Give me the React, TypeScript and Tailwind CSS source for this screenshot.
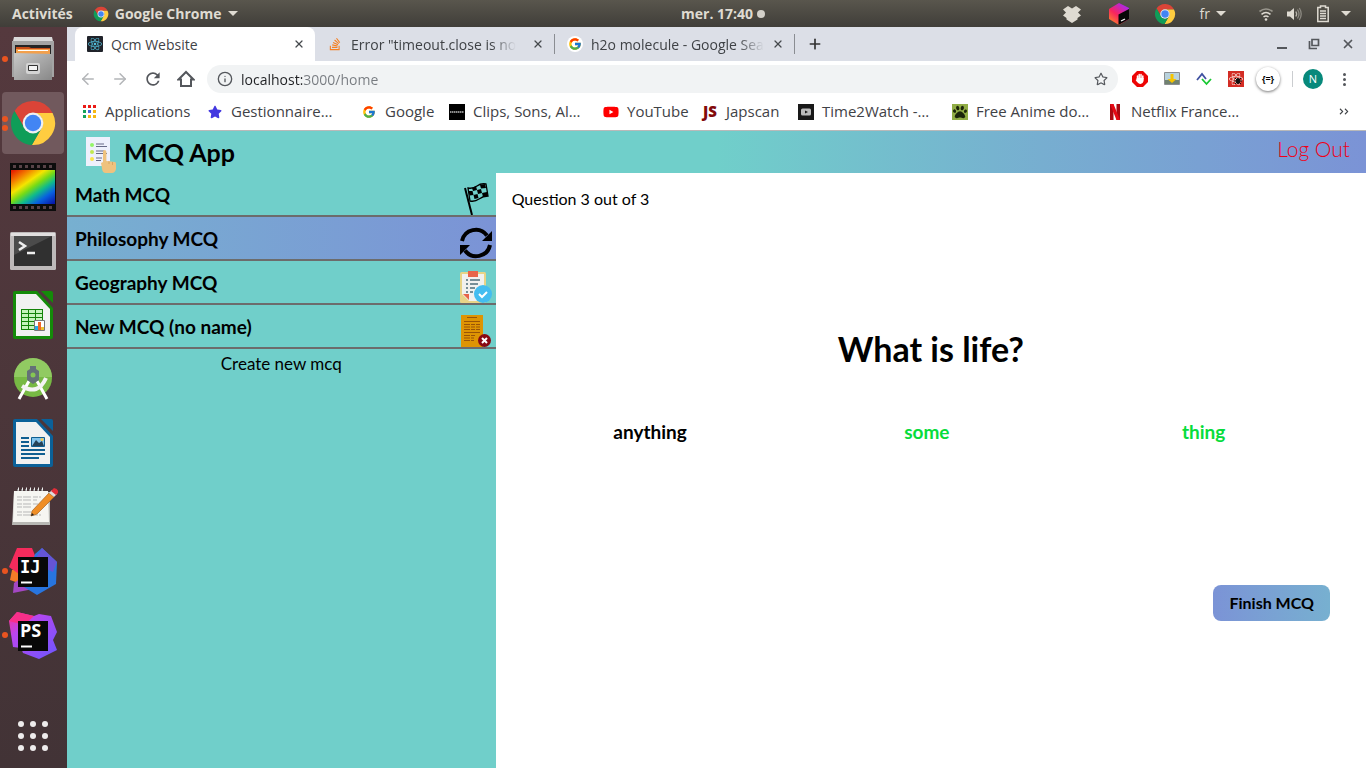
import type { ReactNode } from "react";
import {
  FaChevronRight,
  FaPaw,
  FaReact,
  FaRegStar,
  FaStackOverflow,
  FaStar,
  FaYoutube,
} from "react-icons/fa";
import { FcGoogle } from "react-icons/fc";
import { MdRefresh } from "react-icons/md";
import { ArrowLeft, ArrowRight, Info, Plus, X } from "lucide-react";

const UI = "font-['Open_Sans','Noto_Sans',sans-serif]";

function ChromeLogo({ className }: { className: string }) {
  return (
    <svg viewBox="0 0 48 48" className={className} aria-hidden="true">
      <path fill="#db4437" d="M24 14H43.6A22 22 0 0 0 5.54 12.03L15.34 29A10 10 0 0 1 24 14Z" />
      <path fill="#ffcd40" d="M43.6 14H24A10 10 0 0 1 32.66 29L22.86 45.97A22 22 0 0 0 43.6 14Z" />
      <path fill="#0f9d58" d="M5.54 12.03L15.34 29A10 10 0 0 0 32.66 29L22.86 45.97A22 22 0 0 1 5.54 12.03Z" />
      <circle cx="24" cy="24" r="10.4" fill="#f1f1f1" />
      <circle cx="24" cy="24" r="8.2" fill="#4285f4" />
    </svg>
  );
}

function Caret() {
  return (
    <svg viewBox="0 0 10 5" className="h-[5px] w-[10px] fill-[#dfdbd2]" aria-hidden="true">
      <path d="M0 0h10L5 5z" />
    </svg>
  );
}

function TopBar() {
  return (
    <header className={`${UI} flex h-[27px] shrink-0 items-center bg-linear-to-b from-[#59564d] to-[#403e39] text-[14px] font-bold text-[#dfdbd2]`}>
      <div className="flex w-1/2 items-center pl-3">
        <button type="button">Activités</button>
        <button type="button" className="ml-5 flex items-center gap-1.5">
          <ChromeLogo className="size-4" />
          Google Chrome
          <Caret />
        </button>
      </div>
      <button type="button" className="-ml-0.5 flex items-center gap-1">
        mer. 17:40
        <span className="size-2 rounded-full bg-[#d3d0c9]" />
      </button>
      <div className="ml-auto flex items-center pr-[15px]">
        <svg viewBox="0 0 20 20" className="size-5" fill="#dfdbd2" aria-hidden="true">
          <path d="M6 2l4 2.500L14 2l5 3.500-3 3 3 3-3.500 2.500v1.500L10 19l-5.500-3.500V14L1 11.500l3-3-3-3z" />
        </svg>
        <svg viewBox="0 0 22 22" className="ml-[26px] size-[22px]" aria-hidden="true">
          <defs>
            <linearGradient id="toolbox" x1="0" x2="0.7" y1="1" y2="0">
              <stop offset="0" stopColor="#ff9a1f" />
              <stop offset="0.5" stopColor="#f8255e" />
              <stop offset="1" stopColor="#a928f0" />
            </linearGradient>
          </defs>
          <path fill="url(#toolbox)" d="M11 0l10 5v11l-10 6L1 16V6z" />
          <path fill="#080808" d="M10.500 11.500L21 6v10l-10.500 6z" />
          <path stroke="#fff" strokeWidth="1.300" d="M13 18l4-2" />
        </svg>
        <ChromeLogo className="ml-[24px] size-[22px]" />
        <button type="button" className="ml-6 flex items-center gap-1.5 text-[14px] font-normal">
          fr
          <Caret />
        </button>
        <svg viewBox="0 0 16 16" className="ml-8 size-4" fill="none" stroke="#dfdbd2" strokeWidth="1.600" aria-hidden="true">
          <path stroke="#99968d" d="M1.500 5.500q6.500-5 13 0" />
          <path d="M3.500 8.300q4.500-3.500 9 0M5.500 11q2.500-2 5 0" />
          <circle cx="8" cy="13.500" r="1.300" fill="#dfdbd2" stroke="none" />
        </svg>
        <svg viewBox="0 0 16 16" className="ml-3 size-4" fill="none" aria-hidden="true">
          <path fill="#dfdbd2" d="M1 5.500h3L8 2v12L4 10.500H1z" />
          <path stroke="#bab7ae" strokeWidth="1.300" d="M9.800 5.500q1.700 2.500 0 5" />
          <path stroke="#8d8a82" strokeWidth="1.300" d="M11.500 3.500q3 4.500 0 9M13.300 2q3.800 6 0 12" />
        </svg>
        <svg viewBox="0 0 14 18" className="ml-3.5 h-[18px] w-[14px]" fill="none" stroke="#dfdbd2" strokeWidth="1.500" aria-hidden="true">
          <path d="M4.500 2.500v-1.500h5v1.500h2.700v14H1.800v-14zM4 6h6M4 8.500h6M4 11h6M4 13.500h6" />
        </svg>
        <span className="ml-[11px]">
          <Caret />
        </span>
      </div>
    </header>
  );
}

function FilesIcon() {
  return (
    <svg viewBox="0 0 42 46" className="h-[46px] w-[42px]" aria-hidden="true">
      <defs>
        <linearGradient id="cabinet" x1="0" x2="1" y1="0" y2="1">
          <stop offset="0" stopColor="#c9c9c9" />
          <stop offset="1" stopColor="#888" />
        </linearGradient>
      </defs>
      <path fill="#dadada" d="M2 1h38l1 4H1z" />
      <path fill="#a4a4a4" d="M0 5h42v36H0z" />
      <path fill="#242424" d="M3 9h36v11H3z" />
      <path fill="#c64d18" d="M4 11h13l2 1h19v7H4z" />
      <path fill="#f3a04c" d="M4 13h34v6H4z" />
      <path fill="#fff" d="M6 14h30v1H6z" />
      <path fill="url(#cabinet)" d="M2 17l38 1v26H2z" />
      <rect x="14" y="27" width="14" height="11" rx="2" fill="#d4d4d4" />
      <path fill="#f4f4f4" stroke="#333" d="M16.500 29.500h9v5h-9z" />
    </svg>
  );
}

function FilmIcon() {
  return (
    <svg viewBox="0 0 46 48" className="h-12 w-[46px]" aria-hidden="true">
      <defs>
        <linearGradient id="rainbow" x1="0.05" y1="0" x2="0.95" y2="1">
          <stop offset="0" stopColor="#e51b00" />
          <stop offset="0.18" stopColor="#f27a00" />
          <stop offset="0.36" stopColor="#f5e500" />
          <stop offset="0.5" stopColor="#76db16" />
          <stop offset="0.64" stopColor="#10bb8a" />
          <stop offset="0.8" stopColor="#0861df" />
          <stop offset="1" stopColor="#0818a9" />
        </linearGradient>
      </defs>
      <path fill="#0c0c0c" d="M0 0h46v48H0z" />
      <path stroke="#584348" strokeWidth="3" strokeDasharray="3 3" d="M3 3.500h42M3 44.500h42" />
      <path fill="url(#rainbow)" d="M1 7h44v34H1z" />
    </svg>
  );
}

function TerminalIcon() {
  return (
    <svg viewBox="0 0 46 38" className="h-[38px] w-[46px]" aria-hidden="true">
      <rect width="46" height="38" rx="1.500" fill="#bdb9b9" />
      <path fill="#e1dfdf" d="M1 1h44v3H1z" />
      <path fill="#303030" d="M4 4h38v30H4z" />
      <path fill="#4b4b4b" d="M4 4h38L4 23z" />
      <path fill="none" stroke="#eee" strokeWidth="2.500" d="M9 10l6 4-6 4M17 21h8" />
    </svg>
  );
}

function OfficeIcon({ color, children }: { color: string; children: ReactNode }) {
  return (
    <svg viewBox="0 0 40 48" className="h-12 w-10" aria-hidden="true">
      <path fill={color} d="M2 0h22l16 17v29q0 2-2 2H2q-2 0-2-2V2q0-2 2-2zM28 0h10q2 0 2 2v10z" />
      <path fill="#f1f1f1" d="M3 3h20l14 15v27H3z" />
      {children}
    </svg>
  );
}

function CalcIcon() {
  return (
    <OfficeIcon color="#148b09">
      <path fill="#138208" d="M8 18h22v21H8z" />
      <path fill="#c5f3bc" d="M9 19h6v3H9zM16 19h6v3h-6zM23 19h6v3h-6zM9 23h6v3H9zM16 23h6v3h-6zM23 23h6v3h-6zM9 27h6v3H9zM16 27h6v3h-6zM23 27h6v3h-6zM9 31h6v3H9zM16 31h6v3h-6zM9 35h6v3H9zM16 35h6v3h-6z" />
      <path fill="#fff" stroke="#777" d="M21.500 29.500h10v10h-10z" />
      <path fill="#28a9e6" d="M22 35h3v4h-3z" />
      <path fill="#ef6728" d="M25 31h3v8h-3z" />
      <path fill="#edc133" d="M28 36h3v3h-3z" />
    </OfficeIcon>
  );
}

function WriterIcon() {
  return (
    <OfficeIcon color="#0b6199">
      <path stroke="#0f5e91" strokeWidth="2" d="M8 19h8M8 23h8M8 27h8M8 31h24M8 35h24M8 39h18" />
      <path fill="#83c3ec" stroke="#0f5e91" d="M18.500 18.500h13v9h-13z" />
      <path fill="#254157" d="M19 27l4-6 3 3 3-2 2 5z" />
      <circle cx="29" cy="20.500" r="1.500" fill="#f3c953" />
    </OfficeIcon>
  );
}

function AndroidStudioIcon() {
  return (
    <svg viewBox="0 0 40 42" className="h-[42px] w-10" aria-hidden="true">
      <circle cx="20" cy="20" r="19" fill="#77b944" />
      <path fill="#91ca62" d="M1 19a19 19 0 0 1 38 0z" />
      <path stroke="#fff" strokeWidth="3" d="M16 23L6 41M24 23l10 18" />
      <path fill="none" stroke="#f3f3f3" strokeWidth="4" d="M9 28q16 10 24-8" />
      <path fill="#647177" d="M17 8h6v3l3 2v9l-6 4-6-4v-9l3-2z" />
      <circle cx="20" cy="17" r="2.500" fill="#86c653" />
    </svg>
  );
}

function NotesIcon() {
  return (
    <svg viewBox="0 0 46 40" className="ml-1 h-10 w-[46px]" aria-hidden="true">
      <path fill="#b8b8b4" d="M2 5h36v33H0z" />
      <path fill="#f6f6f2" d="M2 4h34l1 31H1z" />
      <path stroke="#858585" strokeWidth="2" strokeDasharray="2 2" d="M5 3h28" />
      <path stroke="#eee" strokeWidth="3" strokeDasharray="1 3" d="M6 2h27" />
      <path stroke="#b7b7b7" strokeDasharray="5 1 8 2" d="M5 10h24M5 13h20M5 17h22M5 20h15M5 25h14M5 28h24" />
      <path fill="#ef8e25" stroke="#a86321" strokeWidth="0.700" d="M20 24L37 6l5 4-17 17-6 2z" />
      <path fill="#ddd" d="M37 6l3-3 5 4-3 3z" />
      <path fill="#e22d38" d="M39 4l3-3q5 1 4 5l-2 2z" />
      <path fill="#222" d="M19 29l1-3 2 2z" />
    </svg>
  );
}

function IdeaIcon({ label }: { label: string }) {
  const isIdea = label === "IJ";
  return (
    <svg viewBox="0 0 48 48" className="size-12" aria-hidden="true">
      <defs>
        <linearGradient id="violet" x1="0" x2="1" y1="0" y2="1">
          <stop offset="0" stopColor="#ff318c" />
          <stop offset="0.3" stopColor="#b946f0" />
          <stop offset="1" stopColor="#6b57ff" />
        </linearGradient>
      </defs>
      {isIdea ? (
        <>
          <path fill="#f47b27" d="M3 23l12-3 6 20-20-7z" />
          <path fill="#f62b5c" d="M8 1h15l6 15-12 16L0 20z" />
          <path fill="#a347c3" d="M5 36l17-12 7 17-25 5z" />
          <path fill="#2875df" d="M33 1l15 14-1 22-19 11-13-8L26 7z" />
          <path fill="#6554d6" d="M33 1l15 14-4 10-20-9z" />
        </>
      ) : (
        <>
          <path fill="url(#violet)" d="M8 1l17 4 5-2 12 2 6 16-4 8 4 10-18 9-16-6-2-5-8-1L0 10z" />
          <path fill="#f72f89" d="M8 1l17 4-10 9L0 10z" />
        </>
      )}
      <path fill="#080808" d="M9 10h30v30H9z" />
      <text x="11" y="26" fill="#fff" fontSize={isIdea ? 17 : 18} fontWeight="700" className={isIdea ? "font-['DejaVu_Sans_Mono',monospace]" : "font-['Open_Sans',sans-serif]"}>{label}</text>
      <path stroke="#fff" strokeWidth="2" d="M12 35.500h11" />
    </svg>
  );
}

const dockItems = [
  { name: "Files", icon: <FilesIcon />, dots: 1 },
  { name: "Chrome", icon: <ChromeLogo className="size-12" />, dots: 2, active: true },
  { name: "Video", icon: <FilmIcon />, dots: 0 },
  { name: "Terminal", icon: <TerminalIcon />, dots: 0 },
  { name: "Calc", icon: <CalcIcon />, dots: 0 },
  { name: "Android Studio", icon: <AndroidStudioIcon />, dots: 0 },
  { name: "Writer", icon: <WriterIcon />, dots: 0 },
  { name: "Notes", icon: <NotesIcon />, dots: 0 },
  { name: "IntelliJ", icon: <IdeaIcon label="IJ" />, dots: 1 },
  { name: "PhpStorm", icon: <IdeaIcon label="PS" />, dots: 1 },
];

function Dock() {
  return (
    <nav aria-label="Dock" className="flex w-[67px] shrink-0 flex-col bg-linear-to-b from-[#55393e] to-[#423336]">
      {dockItems.map((item) => (
        <button
          key={item.name}
          type="button"
          aria-label={item.name}
          className={`relative mx-0.5 my-px flex h-[62px] w-[62px] items-center justify-center rounded-[4px] ${item.active ? "bg-[#71595d]" : ""}`}
        >
          {item.icon}
          <span className="absolute inset-y-0 left-0 flex flex-col justify-center gap-[3px]">
            {Array.from({ length: item.dots }, (_, i) => (
              <span key={i} className="size-[6px] rounded-full bg-[#e95420]" />
            ))}
          </span>
        </button>
      ))}
      <button type="button" aria-label="Applications" className="mt-auto flex h-16 w-[66px] items-center justify-center">
        <span className="grid grid-cols-3 gap-[6px]">
          {Array.from({ length: 9 }, (_, i) => (
            <span key={i} className="size-[6px] rounded-full bg-[#eeecec]" />
          ))}
        </span>
      </button>
    </nav>
  );
}

function Tab({ title, icon, active = false }: { title: string; icon: ReactNode; active?: boolean }) {
  return (
    <div className={`flex w-[240px] items-center ${active ? "rounded-t-lg bg-white" : ""}`}>
      <button type="button" role="tab" aria-selected={active} className="flex min-w-0 flex-1 items-center gap-2 pl-3">
        <span className="flex size-4 shrink-0 items-center justify-center">{icon}</span>
        <span className={`whitespace-nowrap ${active ? "" : "mask-r-from-85%"}`}>{title}</span>
      </button>
      <button type="button" aria-label={`Close ${title}`} className="mr-2 ml-1 flex size-4 items-center justify-center">
        <X className="size-3 text-[#45494d]" strokeWidth={2.500} />
      </button>
      {!active && <span className="h-5 w-px bg-[#8a8d92]" />}
    </div>
  );
}

function TabStrip() {
  return (
    <div className="flex h-[34px] bg-[#dcdfe7] pl-2 text-[14px] text-[#3f4246]">
      <div role="tablist" className="flex">
        <Tab
          active
          title="Qcm Website"
          icon={
            <span className="flex size-4 items-center justify-center rounded-[1px] bg-[#20232a]">
              <FaReact className="size-3.5 text-[#53bfdc]" />
            </span>
          }
        />
        <Tab title={'Error "timeout.close is no'} icon={<FaStackOverflow className="size-3.5 text-[#f48024]" />} />
        <Tab
          title="h2o molecule - Google Sea"
          icon={
            <span className="flex size-4 items-center justify-center rounded-full bg-white">
              <FcGoogle className="size-3.5" />
            </span>
          }
        />
      </div>
      <button type="button" aria-label="New tab" className="ml-3">
        <Plus className="size-4 text-[#333]" strokeWidth={2.500} />
      </button>
      <div className="ml-auto flex items-center gap-[21px] pr-[11px] text-[#54575c]">
        <button type="button" aria-label="Minimize" className="mt-2 h-0.5 w-[10px] bg-[#54575c]" />
        <button type="button" aria-label="Restore">
          <svg viewBox="0 0 12 12" className="size-3" fill="none" stroke="currentColor" strokeWidth="1.700">
            <path d="M4 1.500h6.500v6H4zM1.500 3v7.500H9" />
          </svg>
        </button>
        <button type="button" aria-label="Close window">
          <X className="size-3.5" strokeWidth={3} />
        </button>
      </div>
    </div>
  );
}

function Toolbar() {
  return (
    <div className="flex h-9 items-center bg-white pr-5 pl-3 text-[#54575c]">
      <div className="flex items-center gap-3.5">
        <button type="button" aria-label="Back"><ArrowLeft className="size-[18px] text-[#b3b5b8]" /></button>
        <button type="button" aria-label="Forward"><ArrowRight className="size-[18px] text-[#b3b5b8]" /></button>
        <button type="button" aria-label="Reload"><MdRefresh className="size-5" /></button>
        <button type="button" aria-label="Home">
          <svg viewBox="0 0 18 18" className="size-[18px]" fill="none" stroke="currentColor" strokeWidth="2">
            <path d="M1.500 9.500L9 2l7.500 7.500H14V16H4V9.500z" />
          </svg>
        </button>
      </div>
      <label className="ml-3 flex h-7 flex-1 items-center rounded-full bg-[#f1f3f4] pr-2.5 pl-2.5">
        <Info className="mr-2 size-4 shrink-0" aria-label="Address" />
        <input
          type="text"
          defaultValue="localhost:3000/home"
          className="min-w-0 flex-1 bg-[linear-gradient(to_right,#202124_61px,#777b80_61px)] bg-clip-text text-[14px] text-transparent outline-none"
        />
        <FaRegStar className="size-3.5" aria-hidden="true" />
      </label>
      <div className="ml-3.5 flex items-center gap-4">
        <svg viewBox="0 0 16 16" className="size-4" aria-hidden="true">
          <path fill="#ed0505" d="M5 0h6l5 5v6l-5 5H5l-5-5V5z" />
          <path fill="none" stroke="#fff" strokeLinecap="round" strokeWidth="1.500" d="M5.500 8V5M7.200 7V3.500M9 7V3.500M10.800 8V5" />
          <path fill="#fff" d="M4.700 7h6.900v3q-.8 3-3 3-2.500 0-5-4l1-.7z" />
        </svg>
        <svg viewBox="0 0 16 14" className="h-3.5 w-4" aria-hidden="true">
          <path fill="#b9d3dd" stroke="#8c8f91" d="M.5.5h15v12H.5z" />
          <path fill="#708270" d="M1 8h14v4H1z" />
          <path fill="#f6c400" d="M6.500 2h3v5h3L8 11 3.500 7h3z" />
        </svg>
        <svg viewBox="0 0 16 14" className="h-3.5 w-4" fill="none" strokeWidth="1.800" aria-hidden="true">
          <path stroke="#3f51a1" d="M1 8l5-6 4 5" />
          <path stroke="#18c832" d="M6 7l4.500 5L15 7" />
        </svg>
        <span className="relative flex size-4 items-center justify-center bg-[#d32c24]">
          <FaReact className="size-3.5 text-[#fbe6e1]" />
          <svg viewBox="0 0 8 8" className="absolute right-0.5 bottom-0.5 size-2" aria-hidden="true">
            <ellipse cx="4" cy="4" rx="2" ry="3" fill="#111" />
            <path stroke="#111" d="M1 1l6 6M7 1L1 7M0 4h8" />
          </svg>
        </span>
        <span className="-mx-1 flex size-6 items-center justify-center rounded-full bg-white text-[9px] font-bold text-black shadow-[0_1px_3px_#0008]">{"{=}"}</span>
      </div>
      <span className="ml-4 h-4 w-px bg-[#cbcdd0]" />
      <button type="button" className="ml-2.5 size-5 rounded-full bg-[#07897b] text-[11px] text-white">N</button>
      <button type="button" aria-label="Menu" className="ml-5 flex flex-col gap-0.5">
        <span className="size-[3px] rounded-full bg-[#54575c]" />
        <span className="size-[3px] rounded-full bg-[#54575c]" />
        <span className="size-[3px] rounded-full bg-[#54575c]" />
      </button>
    </div>
  );
}

const appsColors = ["#ea1b16", "#ea1b16", "#ea1b16", "#15a35b", "#4967dc", "#f6b814", "#15a35b", "#f6b814", "#f6b814"];

const bookmarks = [
  {
    label: "Applications",
    width: "w-[126px]",
    icon: (
      <span className="grid grid-cols-3 gap-[2px]">
        {appsColors.map((color, i) => (
          <span key={i} className="size-[3px]" style={{ backgroundColor: color }} />
        ))}
      </span>
    ),
  },
  { label: "Gestionnaire…", width: "w-[154px]", icon: <FaStar className="size-3.5 text-[#4338e0]" /> },
  { label: "Google", width: "w-[88px]", icon: <FcGoogle className="size-3.5" /> },
  {
    label: "Clips, Sons, Al…",
    width: "w-[154px]",
    icon: (
      <svg viewBox="0 0 16 16" className="size-4">
        <path d="M0 0h16v16H0z" />
        <path stroke="#bbb" strokeWidth="1.500" strokeDasharray="1.500 .5" d="M1 8h14" />
      </svg>
    ),
  },
  { label: "YouTube", width: "w-[99px]", icon: <FaYoutube className="size-4 text-[#f00]" /> },
  { label: "Japscan", width: "w-[96px]", icon: <span className="text-[15px] font-extrabold text-[#820a0a]">JS</span> },
  {
    label: "Time2Watch -…",
    width: "w-[154px]",
    icon: (
      <svg viewBox="0 0 16 16" className="size-4">
        <path fill="#191919" d="M0 0h16v16H0z" />
        <rect x="3" y="4.500" width="10" height="7" rx="1.500" fill="#bbb" />
        <path fill="#191919" d="M7 6.500l3 1.500-3 1.500z" />
      </svg>
    ),
  },
  {
    label: "Free Anime do…",
    width: "w-[155px]",
    icon: (
      <span className="flex size-4 items-center justify-center bg-[#91ad45]">
        <FaPaw className="size-3.5 text-[#1c250a]" />
      </span>
    ),
  },
  {
    label: "Netflix France…",
    width: "w-[150px]",
    icon: (
      <svg viewBox="0 0 16 16" className="size-4">
        <path fill="#a90810" d="M3 0h3.500v16H3zM9.500 0H13v16H9.500z" />
        <path fill="#e50914" d="M3 0h3.500L13 16H9.500z" />
      </svg>
    ),
  },
];

function BookmarksBar() {
  return (
    <nav aria-label="Bookmarks" className="flex h-[34px] items-center border-b border-[#b9b9b9] bg-white pr-4 pb-1 pl-3.5 text-[15px] text-[#3f4246]">
      {bookmarks.map((bookmark) => (
        <a key={bookmark.label} href="#" className={`${bookmark.width} flex items-center gap-2 whitespace-nowrap`}>
          <span className="flex size-4 shrink-0 items-center justify-center">{bookmark.icon}</span>
          {bookmark.label}
        </a>
      ))}
      <button type="button" aria-label="More bookmarks" className="ml-auto flex">
        <FaChevronRight className="-mr-0.5 size-[7px]" />
        <FaChevronRight className="size-[7px]" />
      </button>
    </nav>
  );
}

function AppLogo() {
  return (
    <svg viewBox="0 0 32 38" className="h-[38px] w-8" aria-hidden="true">
      <path fill="#eef0fc" d="M1 1h24v29H1z" />
      <circle cx="7" cy="9" r="2" fill="#94f56a" />
      <circle cx="7" cy="16" r="2" fill="#c1e951" />
      <circle cx="7" cy="23" r="2" fill="#fae54b" />
      <path stroke="#686b88" strokeWidth="1.200" d="M11 8h8M11 10.500h11M11 15h8M11 17.500h11M11 22h6M11 24.500h5" />
      <path fill="#efc27e" d="M18 16q0-2 1.600-2t1.800 2v9l8.600 1q1 0 1 2v5q-1 4-4 4h-6q-4 0-4-5l-1-5 2-1z" />
      <path stroke="#d8a662" d="M24 25v3M27.500 26v3" />
    </svg>
  );
}

function FlagIcon() {
  return (
    <svg viewBox="0 0 32 32" className="size-8" aria-hidden="true">
      <path stroke="#000" strokeWidth="2" d="M5 5l7 27" />
      <path fill="none" stroke="#000" strokeWidth="1.300" d="M8 5q5 1 9-2t9-2l2 12q-5 0-9 3t-9 2z" />
      <path d="M12 5l4-2 1 4-4 1zM20 2l5-1 1 4-5 .5zM8.500 8l4 0 1 4-4 .5zM17 7l4-1 1 4-4 1zM13.500 12l4-1 1 4-4 1zM22 10l5-1 1 4-5 1z" />
    </svg>
  );
}

function RefreshIcon() {
  return (
    <svg viewBox="0 0 32 32" className="size-8" aria-hidden="true">
      <path fill="none" stroke="#000" strokeWidth="4" d="M2 14A14 14 0 0 1 27 8.500M30 18A14 14 0 0 1 5 23.500" />
      <path d="M32 4v10H22zM0 28V18h10z" />
    </svg>
  );
}

function ClipboardIcon() {
  return (
    <svg viewBox="0 0 32 32" className="size-8" aria-hidden="true">
      <rect y="1" width="26" height="31" rx="1.500" fill="#e8d487" />
      <path fill="#f1f1ef" d="M2 3h22v27H9l-7-7z" />
      <path fill="#e86449" d="M8 0h10v6H8zM3 23h6v6z" />
      <path stroke="#768e97" strokeWidth="2" d="M6 9h2M10 9h10M6 13h2M10 13h8M6 17h2M10 17h5M6 21h2M10 21h3" />
      <circle cx="23" cy="23" r="9" fill="#43bdf0" />
      <path fill="none" stroke="#fff" strokeWidth="2" d="M19 23l3 3 5-5" />
    </svg>
  );
}

function DraftIcon() {
  return (
    <svg viewBox="0 0 32 32" className="size-8" aria-hidden="true">
      <path fill="#de9403" d="M1 0h22v32H1z" />
      <path stroke="#995407" strokeWidth="1.200" d="M7 2.500h10M4 6.500h16M4 17.500h16" />
      <path stroke="#995407" strokeWidth="1.200" strokeDasharray="6 1 4 1" d="M4 9.500h16M4 12h16M4 14.500h16M4 20.500h12M4 23h10M4 25.500h10" />
      <circle cx="24.500" cy="25.500" r="6.500" fill="#880912" />
      <path stroke="#fff" strokeWidth="2" d="M22 23l5 5M27 23l-5 5" />
    </svg>
  );
}

const quizzes = [
  { name: "Math MCQ", icon: <FlagIcon /> },
  { name: "Philosophy MCQ", icon: <RefreshIcon />, selected: true },
  { name: "Geography MCQ", icon: <ClipboardIcon /> },
  { name: "New MCQ (no name)", icon: <DraftIcon /> },
];

function QuizApp() {
  return (
    <div className="flex min-h-0 flex-1 flex-col bg-white font-[Lato,sans-serif] text-black">
      <header className="flex h-[42px] shrink-0 bg-[linear-gradient(to_right,#70cfca_50%,#77aed0_75%,#7b93d6)] pr-4 pl-[18px]">
        <div className="flex items-center gap-[7px]">
          <span className="pt-1.5"><AppLogo /></span>
          <h1 className="text-[25px] leading-8 font-bold">MCQ App</h1>
        </div>
        <a href="#" className="ml-auto pt-1 text-[21px] leading-7 font-light text-[#f00018]">Log Out</a>
      </header>
      <div className="flex min-h-0 flex-1">
        <aside className="w-[33%] shrink-0 bg-[#70cfca]">
          <ul>
            {quizzes.map((quiz) => (
              <li key={quiz.name} className={`border-b-2 border-[#6c6c6c] ${quiz.selected ? "bg-linear-to-r from-[#77b0d0] to-[#7b93d6]" : ""}`}>
                <button type="button" className="flex h-[42px] w-full justify-between pr-1 pl-2 text-[19px] leading-[44px] font-bold">
                  {quiz.name}
                  <span className="self-end">{quiz.icon}</span>
                </button>
              </li>
            ))}
          </ul>
          <button type="button" className="w-full py-[3px] text-[17px] leading-6">Create new mcq</button>
        </aside>
        <main className="min-w-0 flex-1 pt-3.5">
          <p className="px-4 text-[16px] leading-6">Question 3 out of 3</p>
          <h2 className="mt-[118px] text-center text-[34px] leading-10 font-bold">What is life?</h2>
          <div className="mt-[51px] grid grid-cols-3 pr-6 pl-4 text-[19px] leading-6 font-bold">
            <button type="button">anything</button>
            <button type="button" className="text-[#07dc3b]">some</button>
            <button type="button" className="text-[#07dc3b]">thing</button>
          </div>
          <div className="mt-[141px] flex justify-end pr-9">
            <button type="button" className="h-9 rounded-lg bg-linear-to-r from-[#7b93d6] to-[#77b0d0] px-4 text-[16px] font-bold">Finish MCQ</button>
          </div>
        </main>
      </div>
    </div>
  );
}

export default function App() {
  return (
    <div className="flex h-screen flex-col overflow-hidden">
      <TopBar />
      <div className="flex min-h-0 flex-1">
        <Dock />
        <div className="flex min-w-0 flex-1 flex-col">
          <div className={UI}>
            <TabStrip />
            <Toolbar />
            <BookmarksBar />
          </div>
          <QuizApp />
        </div>
      </div>
    </div>
  );
}
